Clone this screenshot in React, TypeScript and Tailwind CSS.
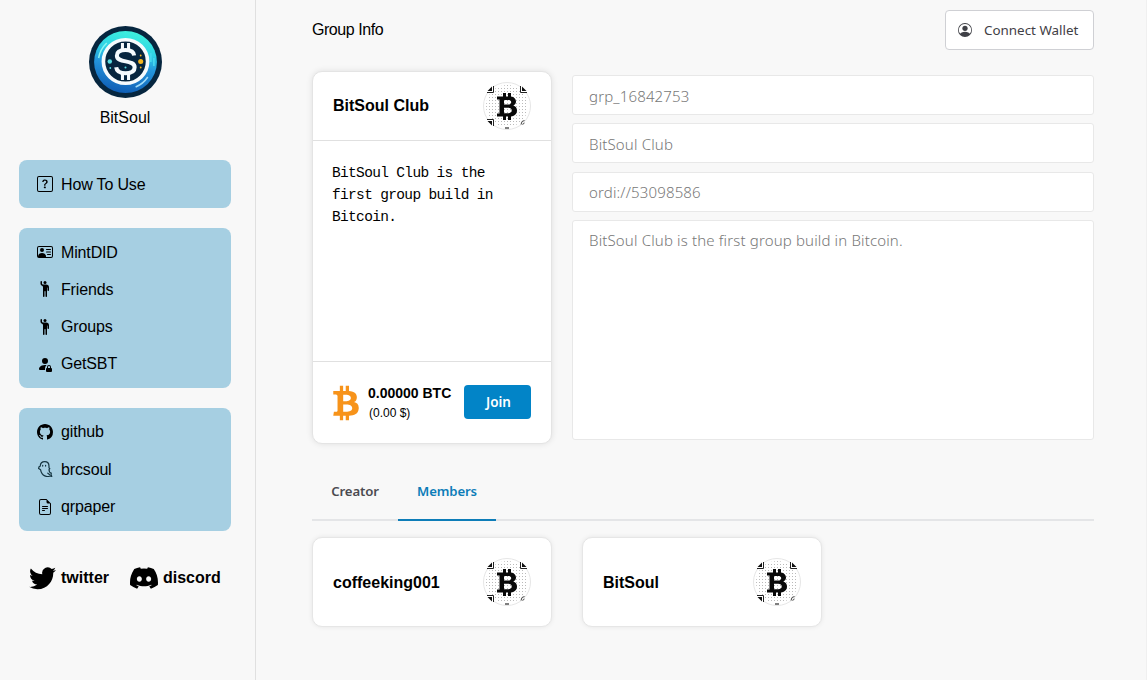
import type { ReactNode } from "react";
import {
  BsDiscord,
  BsFileEarmarkText,
  BsGithub,
  BsPersonCircle,
  BsPersonFillLock,
  BsPersonRaisedHand,
  BsPersonVcard,
  BsQuestionSquare,
  BsTwitter,
} from "react-icons/bs";
import { FaBtc } from "react-icons/fa";

// Round coin used as the brand mark
const Logo = () => (
  <svg className="h-[72px] w-[73px]" viewBox="0 0 72 72" preserveAspectRatio="none">
    <defs>
      <linearGradient id="ring" x1="0.6" y1="0" x2="0.4" y2="1">
        <stop offset="0" stopColor="#3df0dc" />
        <stop offset="0.32" stopColor="#2fd3e6" />
        <stop offset="0.55" stopColor="#2496dc" />
        <stop offset="1" stopColor="#0e5cb4" />
      </linearGradient>
    </defs>
    <circle cx="36" cy="36" r="36" fill="#06263f" />
    <circle cx="36" cy="36" r="31" fill="url(#ring)" />
    <path d="M9.5 32a27 27 0 0 1 8-15" fill="none" stroke="#8df6f2" strokeWidth="1.5" />
    <path d="M46 61a27 27 0 0 0 12-10" fill="none" stroke="#9fdcf8" strokeWidth="1.5" />
    <path d="M61 27v9M64 32v8" stroke="#47d9f0" strokeWidth="1.6" />
    <circle cx="36" cy="35.5" r="21.8" fill="#06263f" stroke="#f5fbfd" strokeWidth="3.6" />
    <path
      d="M44.5 29.5c-.4-4-3.6-5.5-8.500-5.500-5.200 0-8.500 2-8.500 5.700 0 8 17.500 3.300 17.500 11.600 0 4-3.600 6-9 6-5.300 0-8.700-2-9.200-6"
      fill="none"
      stroke="#f5fbfd"
      strokeWidth="4"
    />
    <path d="M33 17v7M39 17v7M33 47v7M39 47v7" stroke="#f5fbfd" strokeWidth="3" />
    <circle cx="20.5" cy="35.5" r="2.2" fill="#58dce0" />
    <circle cx="51" cy="35.5" r="2.5" fill="#f5b71f" />
    <circle cx="51" cy="29.5" r="0.9" fill="#f5b71f" />
    <circle cx="51" cy="41.5" r="0.9" fill="#f5b71f" />
    <circle cx="21" cy="42" r="0.9" fill="#58dce0" />
    <circle cx="36" cy="41.5" r="1" fill="#58dce0" />
  </svg>
);

const SoulIcon = () => (
  <svg
    className="h-4 w-4"
    viewBox="0 0 16 16"
    fill="none"
    stroke="#153540"
    strokeWidth="1.2"
    strokeLinecap="round"
    strokeLinejoin="round"
  >
    <path d="M3.200 5.200C3.400 2.300 5.300.7 7.700.7s4.300 1.700 4.300 4.500v1.600l.8.900-.8.900c0 2.500.5 3.200 2.300 3.600l-.3 1.300.8 1.900-1.900-.5c-1.400.8-3.400.8-5.100 0-2.500-1.200-3.700-3.400-4.200-6.100L1.600 7.600 2 5.800z" />
    <path d="M5.700 4.300v.8M8.600 4.300v.8" />
    <path d="M10.800 12.200l1.700 1.200" />
  </svg>
);

const Avatar = () => (
  <svg className="h-12 w-12" viewBox="0 0 48 48">
    <defs>
      <pattern id="dots" width="3" height="3" patternUnits="userSpaceOnUse">
        <rect width="1" height="1" fill="#b9b9b9" />
      </pattern>
    </defs>
    <circle cx="24" cy="24" r="23.5" fill="#fff" stroke="#e6e6e6" />
    <circle cx="24" cy="24" r="21" fill="url(#dots)" />
    <path d="M4 4h7v7H4zM37 4h7v7h-7zM4 37h7v7H4z" fill="#fff" />
    <path d="M10.5 4v6.500H4M37.500 4v6.500H44M4 37.500h6.500V44" fill="none" stroke="#222" />
    <path d="M9 4.500V9H4.500zM39 4.500V9h4.500zM4.500 39H9v4.500z" fill="#111" />
    <path d="M38 42.500l1-3 2.500-1M39.500 42.500l2-1.500" fill="none" stroke="#444" />
    <path d="M22 46h4" stroke="#555" strokeWidth="1.5" />
    <path
      d="M14 14.500h6V11h3v3.500h2V11h3v3.600c3 .5 5 2.300 5 5 0 2-1 3.300-2.700 4 2.300.7 3.700 2.400 3.700 5 0 3.500-2.300 5.500-6 5.900V38h-3v-3.500h-2V38h-3v-3.500h-6v-3h2.500v-14H14zM21 18v4.500h4c2 0 3.200-.7 3.200-2.300S27 18 25 18zm0 7.700v5.500h4.200c2.300 0 3.500-.9 3.500-2.700 0-1.900-1.300-2.800-3.500-2.800z"
      fill="#090909"
      fillRule="evenodd"
    />
  </svg>
);

const MenuGroup = ({ children }: { children: ReactNode }) => (
  <div className="flex flex-col gap-[13.33px] rounded-lg bg-[#a6cfe2] px-[18px] py-3">{children}</div>
);

const MenuItem = ({ icon, label }: { icon: ReactNode; label: string }) => (
  <a className="flex h-6 items-center gap-2 text-base font-normal">
    {icon}
    <span className="pt-px tracking-[-0.15px]">{label}</span>
  </a>
);

const Sidebar = () => (
  <aside className="flex w-64 shrink-0 flex-col border-r border-[#e0e0e0] pr-6 pl-[19px]">
    <div className="flex flex-col items-center pt-[26px]">
      <Logo />
      <span className="mt-2 text-base leading-6">BitSoul</span>
    </div>

    <nav className="mt-[30px] flex flex-col gap-5">
      <MenuGroup>
        <MenuItem icon={<BsQuestionSquare />} label="How To Use" />
      </MenuGroup>
      <MenuGroup>
        <MenuItem icon={<BsPersonVcard />} label="MintDID" />
        <MenuItem icon={<BsPersonRaisedHand />} label="Friends" />
        <MenuItem icon={<BsPersonRaisedHand />} label="Groups" />
        <MenuItem icon={<BsPersonFillLock />} label="GetSBT" />
      </MenuGroup>
      <MenuGroup>
        <MenuItem icon={<BsGithub />} label="github" />
        <MenuItem icon={<SoulIcon />} label="brcsoul" />
        <MenuItem icon={<BsFileEarmarkText />} label="qrpaper" />
      </MenuGroup>
    </nav>

    {/* Social links */}
    <div className="mt-[33px] flex items-center pl-[10px] text-base font-bold">
      <BsTwitter className="h-[27px] w-[27px]" />
      <span className="ml-[5px] w-[69px]">twitter</span>
      <BsDiscord className="h-7 w-7" />
      <span className="ml-[5px]">discord</span>
    </div>
  </aside>
);

const Field = ({ value }: { value: string }) => (
  <div className="flex h-10 items-center rounded-[3px] border border-[#e8e8e8] bg-white px-4 pt-[2px]">{value}</div>
);

const MemberCard = ({ name }: { name: string }) => (
  <div className="flex h-[90px] w-60 items-center justify-between rounded-[10px] border border-[#e6e6e6] bg-white px-5 shadow-[0_0_5px_rgba(0,0,0,0.08)]">
    <span className="pt-px text-base font-bold">{name}</span>
    <Avatar />
  </div>
);

export default function App() {
  return (
    <div className="flex h-[680px] w-[1147px] overflow-hidden bg-[#f8f8f8] font-['Liberation_Sans',Arial,sans-serif] text-black">
      <Sidebar />

      <main className="flex flex-1 flex-col border-r border-[#f0f0f0] pt-[10px] pr-[52px] pl-14">
        <header className="flex h-10 items-center justify-between">
          <h1 className="text-base font-normal tracking-[-0.45px]">Group Info</h1>
          <button className="flex h-10 w-[149px] items-center gap-3 rounded border border-[#cfd0d4] bg-white pl-3 font-['Noto_Sans',sans-serif] text-[13.4px] text-[#3f4046]">
            <BsPersonCircle className="h-[14px] w-[14px]" />
            Connect Wallet
          </button>
        </header>

        <section className="mt-[21px] flex gap-5">
          {/* Group card */}
          <div className="flex h-[373px] w-60 shrink-0 flex-col rounded-[10px] border border-[#e4e4e4] bg-white shadow-[0_0_6px_rgba(0,0,0,0.1)]">
            <div className="flex h-[69px] items-center justify-between border-b border-[#e0e0e0] px-5">
              <span className="text-base font-bold">BitSoul Club</span>
              <Avatar />
            </div>
            <p className="flex-1 px-[19px] pt-[21px] font-['Liberation_Mono',monospace] text-[14.5px] leading-[22px] tracking-[-0.66px]">
              BitSoul Club is the first group build in Bitcoin.
            </p>
            <div className="flex h-[82px] items-center border-t border-[#e0e0e0] pr-5 pl-5">
              <FaBtc className="h-9 w-[26px] text-[#f7931a]" />
              <div className="ml-[9px] flex flex-col">
                <span className="text-sm leading-5 font-bold">0.00000 BTC</span>
                <span className="pl-px text-xs leading-5">(0.00 $)</span>
              </div>
              <button className="mb-px ml-auto h-[34px] w-[67px] rounded bg-[#0284c7] pl-0.5 font-['Noto_Sans',sans-serif] text-[13.5px] font-semibold text-white">
                Join
              </button>
            </div>
          </div>

          {/* Group details */}
          <div className="flex flex-1 flex-col gap-[8.33px] pt-1 font-['Noto_Sans',sans-serif] text-[15px] font-light tracking-[0.15px] text-[#777777]">
            <Field value="grp_16842753" />
            <Field value="BitSoul Club" />
            <Field value="ordi://53098586" />
            <div className="h-[220px] rounded-[3px] border border-[#e8e8e8] bg-white px-4 pt-[7px] leading-6">
              BitSoul Club is the first group build in Bitcoin.
            </div>
          </div>
        </section>

        {/* Tabs */}
        <div className="mt-[21px] flex h-14 border-b-2 border-[#e4e5e7] font-['Noto_Sans',sans-serif] text-[13.2px] font-semibold tracking-[-0.15px]">
          <button className="h-[54px] w-[86px] text-[#4b4b50]">Creator</button>
          <button className="h-14 w-[98px] border-b-2 border-[#0d7db8] text-[#0d7db8]">Members</button>
        </div>

        <section className="mt-4 flex gap-[30px]">
          <MemberCard name="coffeeking001" />
          <MemberCard name="BitSoul" />
        </section>
      </main>
    </div>
  );
}
